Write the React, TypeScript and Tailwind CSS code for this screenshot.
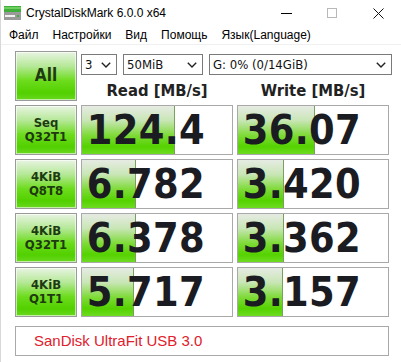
import React from "react";

const rows = [
  { top: "Seq", bottom: "Q32T1", read: "124.4", readBar: 93, write: "36.07", writeBar: 77 },
  { top: "4KiB", bottom: "Q8T8", read: "6.782", readBar: 54, write: "3.420", writeBar: 46 },
  { top: "4KiB", bottom: "Q32T1", read: "6.378", readBar: 54, write: "3.362", writeBar: 46 },
  { top: "4KiB", bottom: "Q1T1", read: "5.717", readBar: 52, write: "3.157", writeBar: 45 },
];

const uiFont = "font-['Segoe_UI','Liberation_Sans',sans-serif]";
const tahoma = "font-['DejaVu_Sans_Condensed','DejaVu_Sans',sans-serif]";

function Chevron() {
  return (
    <svg width="10" height="6" viewBox="0 0 10 6" className="shrink-0">
      <path d="M0.8 0.8 L5 5 L9.2 0.8" fill="none" stroke="#222" strokeWidth="1.4" />
    </svg>
  );
}

function Combo({ value, className }: { value: string; className: string }) {
  return (
    <div
      className={`flex h-[21px] items-center justify-between border border-[#7a7a7a] bg-white pl-[3px] pr-[5px] text-[13px] text-[#111] ${tahoma} font-normal ${className}`}
    >
      <span>{value}</span>
      <Chevron />
    </div>
  );
}

function GreenButton({ children, className = "" }: { children: React.ReactNode; className?: string }) {
  return (
    <div
      className={`flex h-[50px] w-[62px] flex-col items-center justify-center border border-[#9a9a9a] bg-[linear-gradient(to_bottom,#e9f4e2_0%,#b5e897_30%,#6cdc1c_60%,#52d000_85%,#6ad820_100%)] shadow-[inset_0_0_0_1px_rgba(255,255,255,0.6)] ${tahoma} font-bold text-[#1e3a12] ${className}`}
    >
      {children}
    </div>
  );
}

function Cell({ value, bar }: { value: string; bar: number }) {
  return (
    <div className="relative h-[50px] w-[152px] overflow-hidden border border-[#a9a9a9] bg-white">
      <div
        className="absolute inset-y-0 left-0 border-r border-[#7aa060] bg-[linear-gradient(to_bottom,#e6ebe3_0%,#c9e6b6_30%,#7cda35_62%,#55d200_85%,#6edc22_100%)]"
        style={{ width: bar }}
      />
      <div
        className={`relative flex h-full items-center justify-end pr-[27px] text-[41px] font-bold leading-none tracking-[0.3px] text-[#1b1b22] ${tahoma}`}
      >
        {value}
      </div>
    </div>
  );
}

export default function App() {
  return (
    <div className="h-[362px] w-[401px] overflow-hidden border-l border-[#d8d8d8] bg-white">
      <div className={`flex h-[26px] items-center ${uiFont} text-[12px] text-black`}>
        <svg width="17" height="14" viewBox="0 0 17 14" className="ml-[3px] mr-[5px]">
          <rect x="0" y="0" width="17" height="6" fill="#3fae3a" />
          <rect x="0" y="1" width="17" height="2" fill="#6fcf5e" />
          <rect x="0" y="6" width="17" height="8" fill="#9a9a9a" />
          <rect x="1" y="9" width="10" height="2" fill="#f2f2f2" />
          <rect x="13" y="9" width="2" height="2" fill="#3fae3a" />
        </svg>
        <span>CrystalDiskMark 6.0.0 x64</span>
        <div className="ml-auto flex h-full items-center">
          <div className="flex h-full w-[46px] items-center justify-center">
            <div className="h-px w-[11px] bg-black" />
          </div>
          <div className="flex h-full w-[46px] items-center justify-center">
            <div className="h-[10px] w-[10px] border border-[#b8b8b8]" />
          </div>
          <div className="flex h-full w-[46px] items-center justify-center">
            <svg width="11" height="11" viewBox="0 0 11 11">
              <path d="M0.5 0.5 L10.5 10.5 M10.5 0.5 L0.5 10.5" stroke="#111" strokeWidth="1" />
            </svg>
          </div>
        </div>
      </div>

      <div className={`flex h-[19px] items-center gap-[14px] border-b border-[#f0f0f0] pl-[8px] ${uiFont} text-[12px] text-black`}>
        <span>Файл</span>
        <span>Настройки</span>
        <span>Вид</span>
        <span>Помощь</span>
        <span>Язык(Language)</span>
      </div>

      <div className="flex flex-col gap-[4px] pl-[14px] pt-[6px]">
        <div className="flex gap-[4px]">
          <GreenButton className="text-[17px]">All</GreenButton>
          <div className="flex flex-col">
            <div className="flex gap-[6px] pt-[3px]">
              <Combo value="3" className="w-[36px]" />
              <Combo value="50MiB" className="w-[80px]" />
              <Combo value="G: 0% (0/14GiB)" className="w-[183px]" />
            </div>
            <div className={`flex pt-[7px] text-[16.5px] font-bold leading-[18px] text-[#222] ${tahoma}`}>
              <div className="w-[152px] text-center">Read [MB/s]</div>
              <div className="ml-[4px] w-[152px] text-center">Write [MB/s]</div>
            </div>
          </div>
        </div>

        {rows.map((r, i) => (
          <div key={i} className="flex gap-[4px]">
            <GreenButton className="text-[13px] leading-[14px]">
              <span>{r.top}</span>
              <span>{r.bottom}</span>
            </GreenButton>
            <Cell value={r.read} bar={r.readBar} />
            <Cell value={r.write} bar={r.writeBar} />
          </div>
        ))}

        <div className="mt-[5px] flex h-[30px] w-[374px] items-center border border-[#a9a9a9] bg-white pl-[18px] text-[15px] text-[#e0202c] font-['Segoe_UI','Liberation_Sans',sans-serif]">
          SanDisk UltraFit USB 3.0
        </div>
      </div>
    </div>
  );
}
